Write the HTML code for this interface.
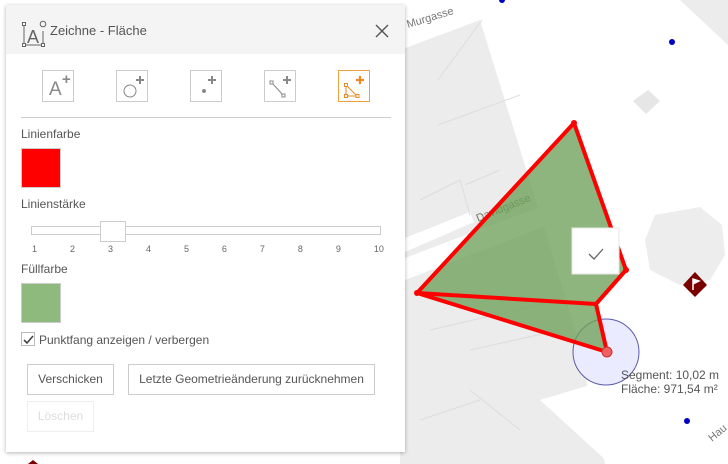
<!DOCTYPE html>
<html><head><meta charset="utf-8"><style>
*{margin:0;padding:0;box-sizing:border-box}
body{width:728px;height:464px;overflow:hidden;position:relative;background:#fff;font-family:"Liberation Sans",sans-serif;color:#555}
#map{position:absolute;left:0;top:0}
.panel{position:absolute;left:6px;top:5px;width:399px;height:447px;background:#fff;box-shadow:0 1px 4px rgba(0,0,0,.3)}
.hdr{height:49px;background:#f4f4f4;position:relative}
.hdr .t{position:absolute;left:44px;top:18px;font-size:13px;color:#555}
.tool{position:absolute;top:65px;width:32px;height:32px;border:1px solid #ccc;background:#fff}
.lbl{position:absolute;left:15px;font-size:12px;color:#555}
.btn{position:absolute;height:31px;border:1px solid #ccc;font-size:12px;color:#555;text-align:center;line-height:29px;background:#fff}
</style></head><body>
<svg id="map" width="728" height="464">
<rect width="728" height="464" fill="#fff"/>
<polygon points="400,50 480,20 545,230 575,330 605,464 400,464" fill="#ececec"/>
<polygon points="680,0 728,0 728,45" fill="#ececec"/>
<polygon points="400,30 455,10 460,18 405,48" fill="#fff"/>
<polygon points="400,240 470,212 474,222 405,252" fill="#fff"/>
<polygon points="405,258 545,205 548,225 405,280" fill="#fff"/>
<polygon points="540,400 640,370 680,464 610,464" fill="#fff"/>
<polygon points="633,101 648,90 660,101 646,114" fill="#e6e6e6"/>
<path d="M655,215 L700,207 L722,225 L725,255 L710,280 L680,285 L650,270 L645,240 Z" fill="#ededed"/>
<g stroke="#ddd" fill="none" stroke-width="1"><path d="M438,80 L482,20 M438,125 L520,95 M465,185 L500,170 M420,200 L460,180 L470,215 M430,330 L560,300 M470,350 L560,330 M470,390 L520,430 M420,420 L480,400"/></g>
<text x="408" y="28" font-size="11" fill="#777" transform="rotate(-17 408 28)" font-family="Liberation Sans">Murgasse</text>
<text x="478" y="222" font-size="11" fill="#6a7a60" transform="rotate(-22 478 222)" font-family="Liberation Sans">Davidgasse</text>
<text x="712" y="442" font-size="11" fill="#777" transform="rotate(-40 712 442)" font-family="Liberation Sans">Hau</text>
<circle cx="672" cy="42" r="3" fill="#0000c0"/><circle cx="687" cy="421" r="3" fill="#0000c0"/><circle cx="502" cy="0" r="3" fill="#0000c0"/>
<polygon points="695,272 707,285 695,297 683,285" fill="#7a0000"/>
<path d="M693,290 V279 L699,281 L693,284" stroke="#fff" stroke-width="1.5" fill="#fff"/>
<circle cx="606" cy="352" r="33" fill="#ebebff" stroke="#5a5aaa" stroke-width="1"/>
<polygon points="574,123 626,270 596,304 607,352 417,293" fill="rgba(110,160,90,.78)"/>
<g stroke="#f00" stroke-width="4" fill="none" stroke-linejoin="round"><polygon points="574,123 626,270 596,304 607,352 417,293"/><line x1="417" y1="293" x2="596" y2="304"/></g>
<g fill="#f00"><circle cx="574" cy="123" r="3"/><circle cx="626" cy="270" r="3"/><circle cx="417" cy="293" r="3"/></g>
<circle cx="607" cy="352" r="5" fill="#f06060" stroke="#c33"/>
<rect x="572" y="228" width="47" height="46" fill="#fff" stroke="#e6e6e6"/>
<path d="M589,254 L594,259 L603,249" stroke="#666" stroke-width="1.3" fill="none"/>
<text x="621" y="379" font-size="12" fill="#555" font-family="Liberation Sans">Segment: 10,02 m</text>
<text x="621" y="393" font-size="12" fill="#555" font-family="Liberation Sans">Fläche: 971,54 m²</text>
<polygon points="33,460 38,464 28,464" fill="#7a0000"/>
</svg>
<div class="panel">
<div class="hdr">
<svg style="position:absolute;left:16px;top:14px" width="30" height="30"><g stroke="#666" fill="none" stroke-width="1"><path d="M2,5 V26 M2,26 H21 M21,26 V12"/><rect x="0.5" y="3.5" width="3" height="3" fill="#fff"/><rect x="0.5" y="24.5" width="3" height="3" fill="#fff"/><rect x="19.5" y="24.5" width="3" height="3" fill="#fff"/><circle cx="21" cy="5" r="2.8"/></g><text x="5" y="24" font-size="18" fill="#666" font-family="Liberation Sans">A</text></svg>
<div class="t">Zeichne - Fläche</div>
<svg style="position:absolute;left:369px;top:19px" width="14" height="14"><path d="M1,1 L13,13 M13,1 L1,13" stroke="#555" stroke-width="1.4"/></svg>
</div>
<div class="tool" style="left:36px"><span style="position:absolute;left:6px;top:8px;font-size:19px;color:#888">A</span><span style="position:absolute;left:19px;top:0;font-size:15px;color:#888;font-weight:bold">+</span></div>
<div class="tool" style="left:110px"><svg width="32" height="32"><circle cx="13" cy="20" r="6" stroke="#888" fill="none"/><path d="M23,5 V13 M19,9 H27" stroke="#888" stroke-width="2"/></svg></div>
<div class="tool" style="left:184px"><svg width="32" height="32"><circle cx="13" cy="20" r="2" fill="#888"/><path d="M21,5 V13 M17,9 H25" stroke="#888" stroke-width="2"/></svg></div>
<div class="tool" style="left:258px"><svg width="32" height="32"><path d="M7,12 L18,24" stroke="#888"/><rect x="5" y="10" width="3" height="3" fill="#fff" stroke="#888"/><rect x="17" y="23" width="3" height="3" fill="#fff" stroke="#888"/><path d="M22,5 V13 M18,9 H26" stroke="#888" stroke-width="2"/></svg></div>
<div class="tool" style="left:332px;border-color:#f0a040"><svg width="32" height="32"><path d="M7,14 L7,25 L18,25 Z" stroke="#ee8822" fill="none"/><rect x="5.5" y="12.5" width="3" height="3" fill="#fff" stroke="#ee8822"/><rect x="5.5" y="23.5" width="3" height="3" fill="#fff" stroke="#ee8822"/><rect x="17" y="23.5" width="3" height="3" fill="#fff" stroke="#ee8822"/><path d="M21,5 V13 M17,9 H25" stroke="#ee8822" stroke-width="2.2"/></svg></div>
<div style="position:absolute;left:15px;top:112px;width:370px;height:1px;background:#ccc"></div>
<div class="lbl" style="top:122px">Linienfarbe</div>
<div style="position:absolute;left:15px;top:143px;width:40px;height:40px;background:#f00;border:1px solid #ccc"></div>
<div class="lbl" style="top:192px">Linienstärke</div>
<div style="position:absolute;left:25px;top:221px;width:350px;height:9px;border:1px solid #ccc"></div>
<div style="position:absolute;left:94px;top:216px;width:26px;height:21px;border:1px solid #ccc;background:#fff"></div>
<div style="position:absolute;left:26px;top:239px;width:352px;font-size:9px;color:#666;display:flex;justify-content:space-between"><span>1</span><span>2</span><span>3</span><span>4</span><span>5</span><span>6</span><span>7</span><span>8</span><span>9</span><span>10</span></div>
<div class="lbl" style="top:257px">Füllfarbe</div>
<div style="position:absolute;left:15px;top:278px;width:40px;height:40px;background:#8fba7e;border:1px solid #ccc"></div>
<div style="position:absolute;left:15px;top:327px;width:14px;height:14px;border:1px solid #bbb"><svg width="12" height="12"><path d="M2,6 L5,9 L11,2" stroke="#444" stroke-width="1.6" fill="none"/></svg></div>
<div class="lbl" style="left:33px;top:328px">Punktfang anzeigen / verbergen</div>
<div class="btn" style="left:21px;top:359px;width:87px">Verschicken</div>
<div class="btn" style="left:122px;top:359px;width:247px">Letzte Geometrieänderung zurücknehmen</div>
<div class="btn" style="left:21px;top:396px;width:67px;color:#ddd;border-color:#eee">Löschen</div>
</div>
</body></html>
